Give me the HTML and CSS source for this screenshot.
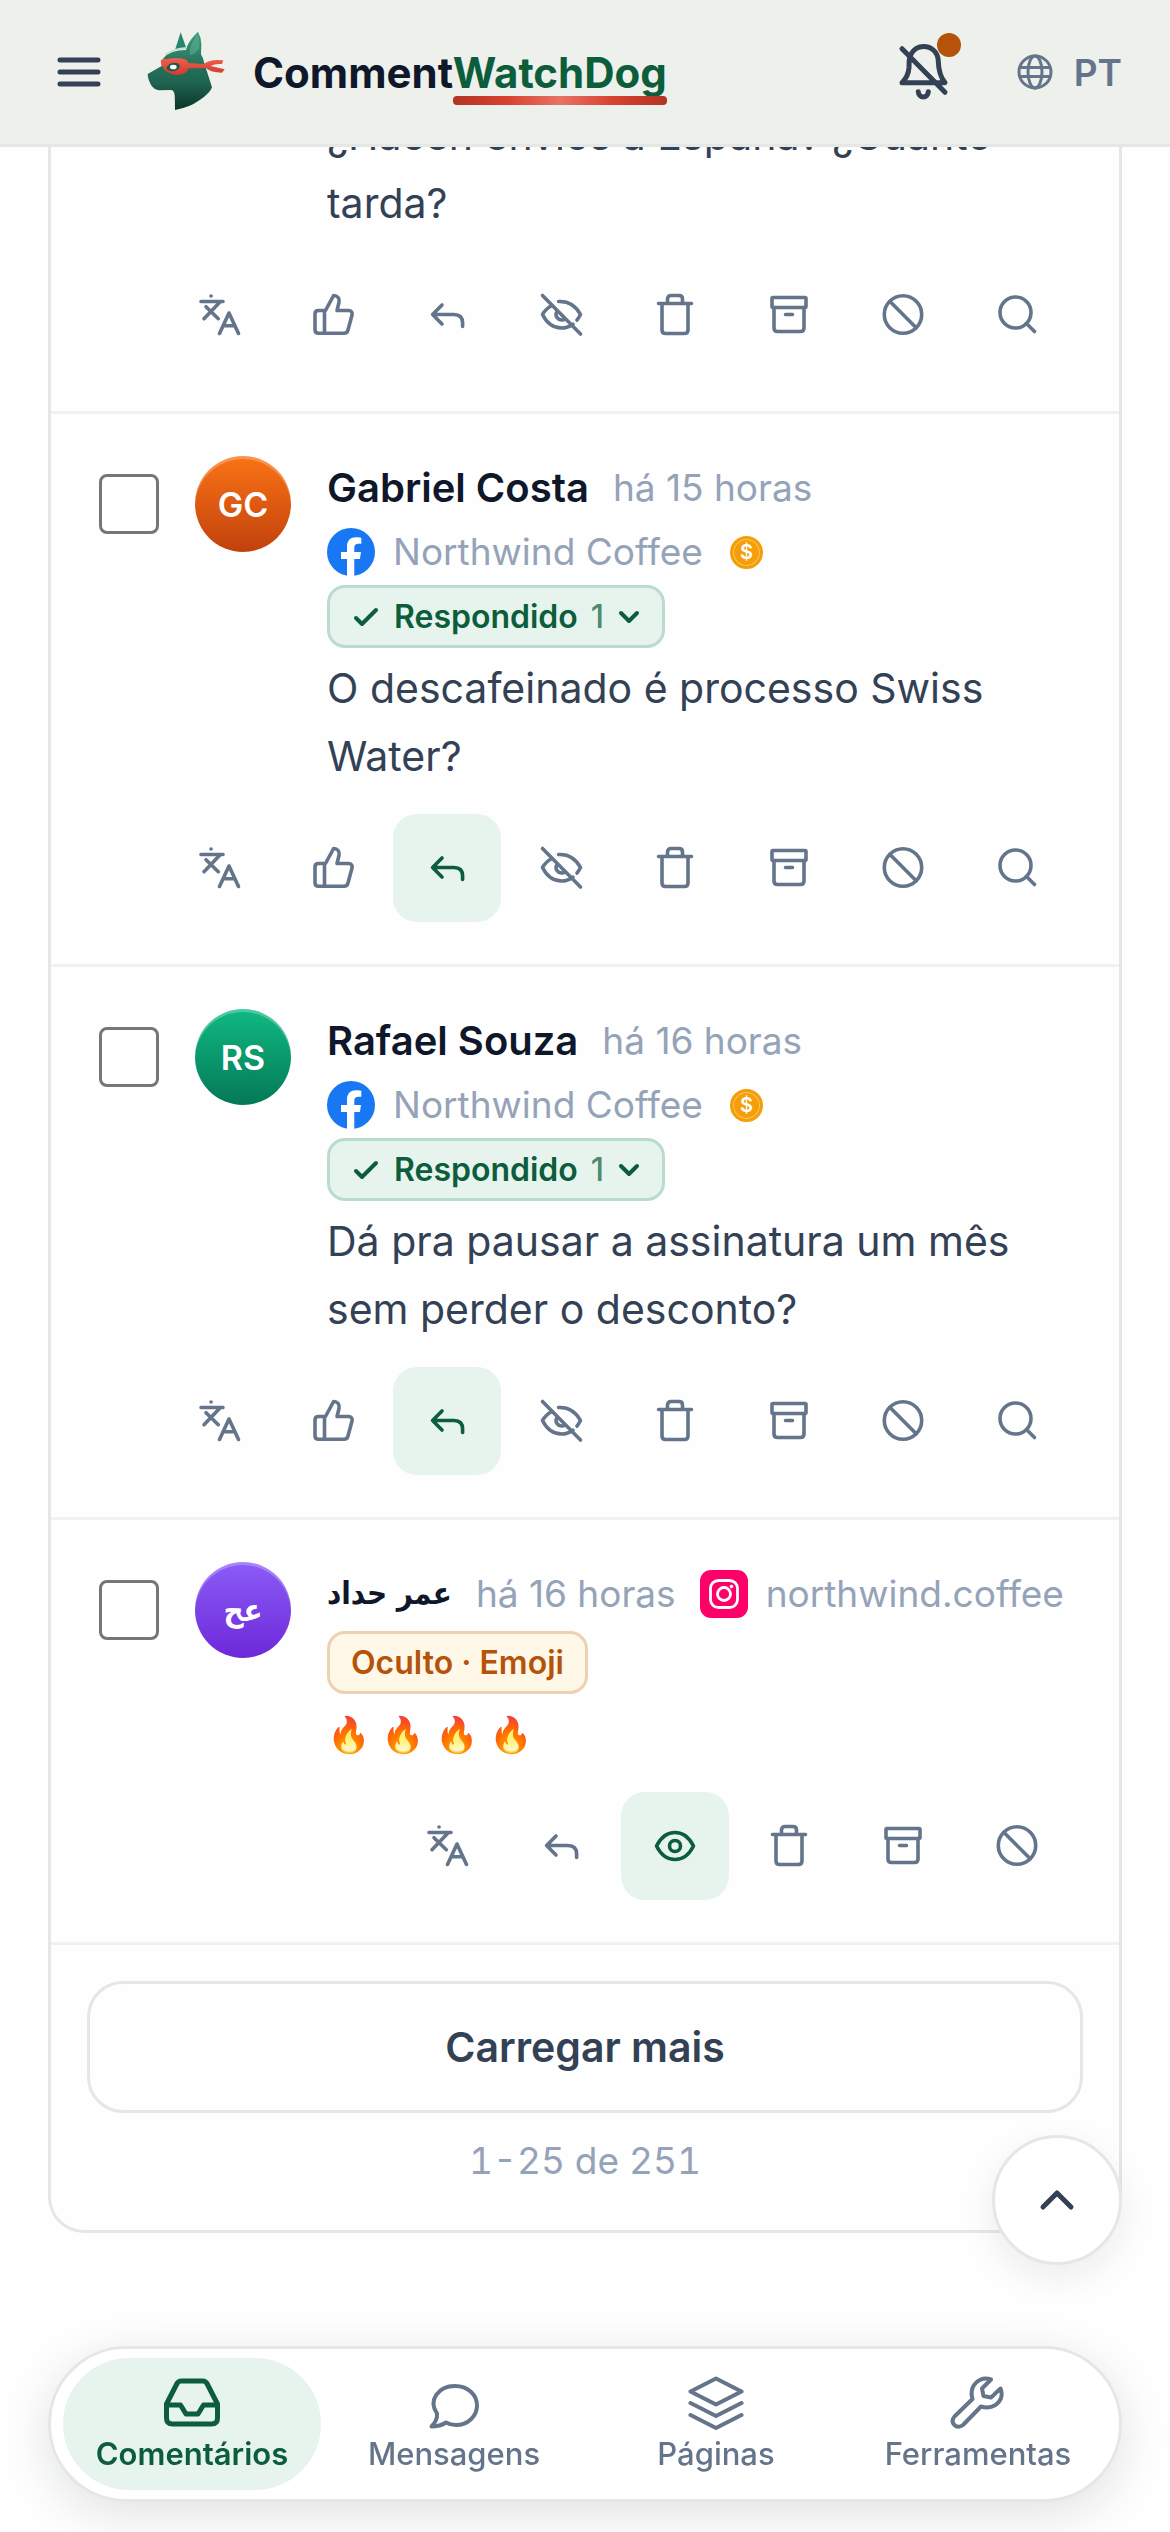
FILE: index.html
```html
<!DOCTYPE html>
<html lang="pt">
<head>
<meta charset="utf-8">
<meta name="viewport" content="width=device-width, initial-scale=1">
<title>CommentWatchDog</title>
<link rel="stylesheet" href="styles.css">
</head>
<body>
<svg class="sprite" aria-hidden="true">
  <symbol id="translate" viewBox="0 0 48 48"><path d="M16 5h.1M6 10.500h22M24.500 11.500L9 27.700M11 15.700l12.300 12M24.500 42.500L34 22l9.500 20.500M28 34.700h12"/></symbol>
  <symbol id="like" viewBox="0 0 48 48"><path d="M15.500 19.500V42M16.500 19.500L24.600 4.500c4 0 6.400 3 5.400 7l-2 8h11.500c2.800 0 4.200 1.800 3.500 4.500L39 39c-.6 2.200-1.800 3.300-4 3.300H9.500c-2.200 0-3.500-1.300-3.500-3.500V23c0-2.200 1.300-3.500 3.500-3.500z"/></symbol>
  <symbol id="reply" viewBox="0 0 48 48"><path d="M19 14l-9.400 9.500L19 33M9.600 23.500H31c6 0 8.600 3 8.600 8.500v3.500"/></symbol>
  <symbol id="eye-off" viewBox="0 0 48 48"><path d="M5.500 4.500l38 38.500M15 14.500c-4 2-7.500 5.500-9.500 9C10 32.500 16.500 37 24.500 37c4.500 0 8-1.200 11.500-3.800M21.600 10.500c9.400-.5 17 4 21.900 13-1 2-2 3.700-3.500 5.500M20 20.300c-2.600 4.700.8 9.500 6.500 8.500"/></symbol>
  <symbol id="eye" viewBox="0 0 48 48"><path d="M5.500 24C10 15 16 10.500 24 10.500S38 15 42.500 24C38 33 32 37.500 24 37.500S10 33 5.500 24z"/><circle cx="24" cy="24" r="5.500"/></symbol>
  <symbol id="trash" viewBox="0 0 48 48"><path d="M7.500 12.500h33M16.500 12V8c0-2.200 1.300-3.500 3.500-3.500h8c2.200 0 3.500 1.300 3.500 3.500v4M11 12.500V39c0 2.200 1.300 3.500 3.500 3.500h19c2.200 0 3.500-1.300 3.500-3.500V12.500"/></symbol>
  <symbol id="archive" viewBox="0 0 48 48"><rect x="7" y="6.500" width="34" height="10" rx="1"/><path d="M9 16.500V37c0 2.200 1.300 3.500 3.500 3.500h23c2.200 0 3.500-1.300 3.500-3.500V16.500M20.500 23.500h7"/></symbol>
  <symbol id="ban" viewBox="0 0 48 48"><circle cx="24" cy="23.500" r="18.700"/><path d="M11 10.500L37.200 36.700"/></symbol>
  <symbol id="search" viewBox="0 0 48 48"><circle cx="22.500" cy="21.500" r="15.500"/><path d="M33.500 32.500l8 8"/></symbol>
  <symbol id="facebook" viewBox="0 0 48 48"><circle cx="24" cy="24" r="24" fill="#1877f2"/><path fill="#fff" d="M20 48V31h-6v-7h6v-5.500C20 12.500 23.600 9.300 29 9.300c2.600 0 5.300.5 5.300.5v6h-3c-3 0-4 1.800-4 3.700V24h6.700l-1.100 7h-5.600v17z"/></symbol>
  <symbol id="instagram" viewBox="0 0 48 48"><rect width="48" height="48" rx="11" fill="#ff0069"/><g fill="none" stroke="#fff" stroke-width="2.800"><rect x="10.500" y="10.500" width="27" height="27" rx="8"/><circle cx="24" cy="24" r="6.500"/></g><circle cx="31.500" cy="16.500" r="1.800" fill="#fff"/></symbol>
  <symbol id="check" viewBox="0 0 30 30"><path d="M5 16l6 6L25 8"/></symbol>
  <symbol id="chevron" viewBox="0 0 24 24"><path d="M4 8l8 8 8-8"/></symbol>
</svg>

<header class="topbar">
  <button class="icon-button" type="button" aria-label="Menu">
    <svg class="menu-icon" viewBox="0 0 44 30"><path d="M3 3h38M3 15h38M3 27h38"/></svg>
  </button>
  <a class="brand" href="#">
    <svg class="brand-logo" viewBox="45 36 246 246" aria-hidden="true">
      <defs>
        <linearGradient id="coat" x1="0" y1="0" x2="0" y2="1"><stop offset="0" stop-color="#3f9b7b"/><stop offset=".45" stop-color="#24705a"/><stop offset=".65" stop-color="#1f6450"/><stop offset="1" stop-color="#0a3529"/></linearGradient>
        <linearGradient id="scarf" x1="0" y1="0" x2="0" y2="1"><stop offset="0" stop-color="#f0604e"/><stop offset="1" stop-color="#cf3a2e"/></linearGradient>
      </defs>
      <path fill="#24866a" d="M136 90L152 40l16 45q-16 0-32 5z"/>
      <path fill="url(#coat)" d="M53 165l42-24q-2-15 6-24 20-24 67-24 4-24 36-55 10 18 10 38l-1 30q7 10 10 27l23 72q-5 17-38 39-30 22-73 29 0-25-1-44-1-14-10-16l-38 1q-14-3-21-13-12-20-12-36z"/>
      <path fill="#5cae92" opacity=".6" d="M180 92q6-26 23-48 7 18 5 44-12 18-28 20z"/>
      <path fill="none" stroke="#b9dccd" stroke-width="4" d="M108 106q20-16 58-17"/>
      <path fill="url(#scarf)" d="M92 124q6-5 20-4 26-6 48-1 12 2 15 13l46 3q22-16 59-11l-4 11q-24-1-34 6l42 10-8 10q-34 0-48-14l-52 1q-6 20-36 20-32-4-42-24-6-8-6-20z"/>
      <ellipse cx="130" cy="144" rx="20" ry="12" fill="#1f5a49" transform="rotate(-12 130 144)"/>
      <ellipse cx="130" cy="144" rx="10" ry="7" fill="#fff"/>
    </svg>
    <span class="brand-name">Comment<span class="brand-accent">WatchDog</span></span>
  </a>
  <button class="icon-button bell" type="button" aria-label="Notificações desativadas">
    <svg class="bell-icon" viewBox="0 0 60 60"><path d="M8 6.700l43 43.600M51 40.700H8c4-4 6.500-9 7-15 .3-6-.5-9 2-13.500C20 7 24 4.500 29.500 4.500c8 0 14 5.500 14.700 13.500.3 9 1.800 17 6.800 22.700zM24.300 49.700c.5 7 9.500 7 10 0"/></svg>
    <span class="bell-dot"></span>
  </button>
  <button class="icon-button language" type="button">
    <svg class="globe-icon" viewBox="0 0 36 36"><circle cx="18" cy="18" r="16"/><ellipse cx="18" cy="18" rx="7" ry="16"/><path d="M3 13.500h30M3 22.500h30"/></svg>
    PT
  </button>
</header>

<main class="page">
  <section class="card">
    <article class="comment comment-scrolled">
      <div class="comment-body">
        <p class="comment-text">¿Hacen envíos a España? ¿Cuánto tarda?</p>
      </div>
      <div class="actions">
        <button type="button" aria-label="Traduzir"><svg><use href="#translate"/></svg></button>
        <button type="button" aria-label="Curtir"><svg><use href="#like"/></svg></button>
        <button type="button" aria-label="Responder"><svg><use href="#reply"/></svg></button>
        <button type="button" aria-label="Ocultar"><svg><use href="#eye-off"/></svg></button>
        <button type="button" aria-label="Excluir"><svg><use href="#trash"/></svg></button>
        <button type="button" aria-label="Arquivar"><svg><use href="#archive"/></svg></button>
        <button type="button" aria-label="Bloquear"><svg><use href="#ban"/></svg></button>
        <button type="button" aria-label="Buscar"><svg><use href="#search"/></svg></button>
      </div>
    </article>

    <article class="comment">
      <input class="pick" type="checkbox" aria-label="Selecionar comentário de Gabriel Costa">
      <span class="avatar avatar-orange">GC</span>
      <div class="comment-body">
        <div class="meta">
          <span class="author">Gabriel Costa</span>
          <span class="time">há 15 horas</span>
          <span class="source"><svg class="network"><use href="#facebook"/></svg>Northwind Coffee<span class="coin">$</span></span>
          <button class="badge badge-green" type="button"><svg class="badge-check"><use href="#check"/></svg>Respondido <span class="count">1</span><svg class="badge-chevron"><use href="#chevron"/></svg></button>
        </div>
        <p class="comment-text">O descafeinado é processo Swiss Water?</p>
      </div>
      <div class="actions">
        <button type="button" aria-label="Traduzir"><svg><use href="#translate"/></svg></button>
        <button type="button" aria-label="Curtir"><svg><use href="#like"/></svg></button>
        <button class="active" type="button" aria-label="Responder"><svg><use href="#reply"/></svg></button>
        <button type="button" aria-label="Ocultar"><svg><use href="#eye-off"/></svg></button>
        <button type="button" aria-label="Excluir"><svg><use href="#trash"/></svg></button>
        <button type="button" aria-label="Arquivar"><svg><use href="#archive"/></svg></button>
        <button type="button" aria-label="Bloquear"><svg><use href="#ban"/></svg></button>
        <button type="button" aria-label="Buscar"><svg><use href="#search"/></svg></button>
      </div>
    </article>

    <article class="comment">
      <input class="pick" type="checkbox" aria-label="Selecionar comentário de Rafael Souza">
      <span class="avatar avatar-green">RS</span>
      <div class="comment-body">
        <div class="meta">
          <span class="author">Rafael Souza</span>
          <span class="time">há 16 horas</span>
          <span class="source"><svg class="network"><use href="#facebook"/></svg>Northwind Coffee<span class="coin">$</span></span>
          <button class="badge badge-green" type="button"><svg class="badge-check"><use href="#check"/></svg>Respondido <span class="count">1</span><svg class="badge-chevron"><use href="#chevron"/></svg></button>
        </div>
        <p class="comment-text">Dá pra pausar a assinatura um mês sem perder o desconto?</p>
      </div>
      <div class="actions">
        <button type="button" aria-label="Traduzir"><svg><use href="#translate"/></svg></button>
        <button type="button" aria-label="Curtir"><svg><use href="#like"/></svg></button>
        <button class="active" type="button" aria-label="Responder"><svg><use href="#reply"/></svg></button>
        <button type="button" aria-label="Ocultar"><svg><use href="#eye-off"/></svg></button>
        <button type="button" aria-label="Excluir"><svg><use href="#trash"/></svg></button>
        <button type="button" aria-label="Arquivar"><svg><use href="#archive"/></svg></button>
        <button type="button" aria-label="Bloquear"><svg><use href="#ban"/></svg></button>
        <button type="button" aria-label="Buscar"><svg><use href="#search"/></svg></button>
      </div>
    </article>

    <article class="comment">
      <input class="pick" type="checkbox" aria-label="Selecionar comentário de عمر حداد">
      <span class="avatar avatar-purple" lang="ar">عح</span>
      <div class="comment-body">
        <div class="meta">
          <span class="author" lang="ar" dir="rtl">عمر حداد</span>
          <span class="time">há 16 horas</span>
          <span class="source"><svg class="network"><use href="#instagram"/></svg>northwind.coffee</span>
          <span class="badge badge-amber">Oculto · Emoji</span>
        </div>
        <p class="comment-text comment-emoji">🔥 🔥 🔥 🔥</p>
      </div>
      <div class="actions">
        <button type="button" aria-label="Traduzir"><svg><use href="#translate"/></svg></button>
        <button type="button" aria-label="Responder"><svg><use href="#reply"/></svg></button>
        <button class="active" type="button" aria-label="Mostrar"><svg><use href="#eye"/></svg></button>
        <button type="button" aria-label="Excluir"><svg><use href="#trash"/></svg></button>
        <button type="button" aria-label="Arquivar"><svg><use href="#archive"/></svg></button>
        <button type="button" aria-label="Bloquear"><svg><use href="#ban"/></svg></button>
      </div>
    </article>

    <footer class="pager">
      <button class="load-more" type="button">Carregar mais</button>
      <p class="range">1-25 de 251</p>
    </footer>
  </section>
</main>

<button class="to-top" type="button" aria-label="Voltar ao topo">
  <svg viewBox="0 0 36 36"><path d="M4 25l14-14 14 14"/></svg>
</button>

<nav class="tabbar">
  <a class="tab tab-current" href="#" aria-current="page">
    <svg viewBox="0 0 60 60"><path d="M4.500 32h14l5.500 9h12l5.500-9h14M15 10.500c1-1.500 2-2.500 4-2.500h22c2 0 3 1 4 2.500L55.500 31v14c0 4-2 6-6 6h-39c-4 0-6-2-6-6V31z"/></svg>
    Comentários
  </a>
  <a class="tab" href="#">
    <svg viewBox="0 0 60 60"><path d="M13 40.500C4 27.500 14 13 31 13c13 0 22 9 22 19.500S44 52 32 52c-4 0-7-.8-10-2.500-4.500 3-9 4-14.500 4 4-4 6-8 5.500-13z"/></svg>
    Mensagens
  </a>
  <a class="tab" href="#">
    <svg viewBox="0 0 60 60"><path d="M30 5.500L4.500 18.500 30 31.500l25.500-13zM4.500 30L30 43l25.500-13M4.500 42L30 55l25.500-13"/></svg>
    Páginas
  </a>
  <a class="tab" href="#">
    <svg viewBox="0 0 60 60"><path d="M43 6.500c-11-4-22.500 6-18.500 19.500L6.500 43.500c-3 3.500-2 6.500 0 8.500s5.500 2.500 8.500 0L33 33.500c13 4 24-6 19.500-18L43 24.500l-7.500-1.500-1.500-7.500z"/></svg>
    Ferramentas
  </a>
</nav>
</body>
</html>
```
FILE: styles.css
```css
:root {
  --ink: #0f172a;
  --text: #334155;
  --muted: #64748b;
  --faint: #94a3b8;
  --green: #0b5d3b;
  --green-soft: #e7f4ed;
  --line: #e5e7e4;
}

* { box-sizing: border-box; }

body {
  margin: 0;
  background: #fefefe;
  color: var(--text);
  font-family: Inter, "Noto Sans", "DejaVu Sans", sans-serif;
  font-size: 41px;
}

button {
  margin: 0;
  padding: 0;
  border: 0;
  background: none;
  color: inherit;
  font: inherit;
}

a { color: inherit; text-decoration: none; }

svg {
  display: block;
  flex: none;
  fill: none;
  stroke: currentColor;
  stroke-linecap: round;
  stroke-linejoin: round;
}

.sprite { position: absolute; width: 0; height: 0; }

.topbar {
  position: fixed;
  inset: 0 0 auto;
  z-index: 2;
  display: flex;
  align-items: center;
  height: 147px;
  padding: 0 48px 0 57px;
  border-bottom: 3px solid var(--line);
  background: #eef0eb;
}

.icon-button { display: flex; align-items: center; }
.menu-icon { width: 44px; height: 30px; stroke-width: 5; color: var(--text); }

.brand { display: flex; align-items: center; gap: 26px; margin: 0 auto 0 44px; }
.brand-logo { width: 82px; height: 82px; stroke: none; }
.brand-name { color: var(--ink); font-size: 42px; font-weight: 700; }
.brand-accent { position: relative; color: var(--green); }
.brand-accent::after {
  content: "";
  position: absolute;
  inset: auto 0 -7px;
  height: 9px;
  border-radius: 4px;
  background: linear-gradient(90deg, #b03426, #d8412f 25%, #e57366 50%, #d8412f 75%, #b03426);
}

.bell { position: relative; margin-right: 63px; }
.bell-icon { width: 60px; height: 60px; stroke-width: 5; color: var(--text); }
.bell-dot {
  position: absolute;
  top: -9px;
  right: -7px;
  width: 24px;
  height: 24px;
  border-radius: 50%;
  background: #b45309;
}

.language { gap: 21px; color: var(--muted); font-size: 37px; font-weight: 600; }
.globe-icon { width: 36px; height: 36px; stroke-width: 3; }

.page { padding: 0 48px 300px; }

.card {
  border: 3px solid var(--line);
  border-top: 0;
  border-radius: 0 0 36px 36px;
}

.comment {
  display: grid;
  grid-template-columns: 60px 96px 1fr;
  column-gap: 36px;
  padding: 42px 48px;
  border-bottom: 3px solid #f1f2f0;
}

.comment-scrolled { padding-top: 101px; }
.comment-body { grid-column: 3; min-width: 0; }

.pick {
  appearance: none;
  width: 60px;
  height: 60px;
  margin: 18px 0 0;
  border: 3px solid #767676;
  border-radius: 8px;
  background: #fff;
}

.avatar {
  display: grid;
  place-items: center;
  width: 96px;
  height: 96px;
  border-radius: 50%;
  box-shadow: inset 0 3px 0 rgba(255, 255, 255, .25);
  color: #fff;
  font-size: 34px;
  font-weight: 600;
}
.avatar-orange { background: linear-gradient(#f97316, #c2410c); }
.avatar-green { background: linear-gradient(#10b981, #047857); }
.avatar-purple { background: linear-gradient(#8b5cf6, #6d28d9); }

.meta {
  display: flex;
  flex-wrap: wrap;
  align-items: center;
  gap: 6px 24px;
  margin-bottom: 6px;
}
.author { color: var(--ink); font-size: 40px; font-weight: 600; line-height: 63px; }
.author:lang(ar), .avatar:lang(ar) {
  font-family: "DejaVu Sans Condensed", "DejaVu Sans", sans-serif;
  font-size: 31px;
}
.time { color: var(--faint); font-size: 37px; }
.source {
  display: flex;
  align-items: center;
  gap: 18px;
  color: var(--faint);
  font-size: 37px;
  line-height: 54px;
}
.network { width: 48px; height: 48px; stroke: none; }
.coin {
  display: grid;
  place-items: center;
  width: 33px;
  height: 33px;
  margin-left: 9px;
  border: 3px solid #f59e0b;
  border-radius: 50%;
  background: #f59e0b;
  box-shadow: inset 0 0 0 1px #fcc95b;
  color: #fff;
  font-size: 20px;
  font-weight: 600;
  line-height: 27px;
}

.badge {
  display: flex;
  align-items: center;
  height: 63px;
  padding: 0 21px;
  border: 3px solid;
  border-radius: 18px;
  font-size: 32px;
  font-weight: 600;
}
.badge-green { gap: 13px; border-color: #b9dccc; background: var(--green-soft); color: var(--green); }
.badge-amber { border-color: #ecd1b3; background: #fff8e9; color: #b45309; }
.badge-check { width: 30px; height: 30px; stroke-width: 4; }
.badge-chevron { width: 24px; height: 24px; stroke-width: 4; }
.count { font-weight: 500; opacity: .7; }

.comment-text { margin: 0; line-height: 68px; }
.comment-emoji { font-size: 35px; }

.actions {
  grid-column: 1 / -1;
  display: flex;
  justify-content: flex-end;
  gap: 6px;
  margin-top: 24px;
}
.actions button {
  display: grid;
  place-items: center;
  width: 108px;
  height: 108px;
  border-radius: 24px;
  color: var(--muted);
}
.actions svg { width: 48px; height: 48px; stroke-width: 3.6; }
.actions .active { background: var(--green-soft); color: var(--green); }

.pager { padding: 36px 36px 42px; text-align: center; }
.load-more {
  width: 100%;
  height: 132px;
  border: 3px solid var(--line);
  border-radius: 36px;
  font-weight: 600;
}
.range {
  margin: 21px 0 0;
  color: var(--faint);
  font-size: 37px;
  font-variant-numeric: tabular-nums;
  line-height: 54px;
}

.to-top {
  position: fixed;
  right: 48px;
  bottom: 267px;
  display: grid;
  place-items: center;
  width: 130px;
  height: 130px;
  border: 3px solid var(--line);
  border-radius: 50%;
  background: #fff;
  box-shadow: 0 12px 36px rgba(15, 23, 42, .08);
}
.to-top svg { width: 36px; height: 36px; stroke-width: 5; }

.tabbar {
  position: fixed;
  inset: auto 48px 30px;
  display: grid;
  grid-template-columns: repeat(4, 1fr);
  gap: 4px;
  padding: 9px 12px;
  border: 3px solid var(--line);
  border-radius: 78px;
  background: #fff;
  box-shadow: 0 12px 48px rgba(15, 23, 42, .12);
}
.tab {
  display: flex;
  flex-direction: column;
  align-items: center;
  height: 132px;
  padding-top: 15px;
  border-radius: 66px;
  color: var(--muted);
  font-size: 31px;
  font-weight: 500;
  line-height: 42px;
}
.tab svg { width: 60px; height: 60px; stroke-width: 4; }
.tab-current { background: var(--green-soft); color: var(--green); font-weight: 600; }
.tab-current svg { stroke-width: 5; }
```
